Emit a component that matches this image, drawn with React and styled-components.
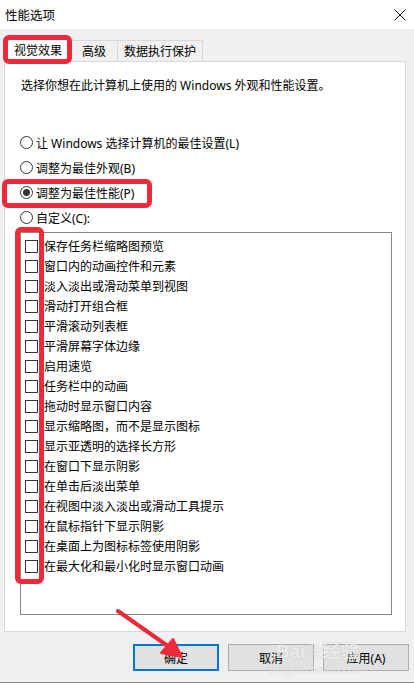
import React from 'react'
import styled, { createGlobalStyle } from 'styled-components'

const options = [
  '保存任务栏缩略图预览',
  '窗口内的动画控件和元素',
  '淡入淡出或滑动菜单到视图',
  '滑动打开组合框',
  '平滑滚动列表框',
  '平滑屏幕字体边缘',
  '启用速览',
  '任务栏中的动画',
  '拖动时显示窗口内容',
  '显示缩略图，而不是显示图标',
  '显示亚透明的选择长方形',
  '在窗口下显示阴影',
  '在单击后淡出菜单',
  '在视图中淡入淡出或滑动工具提示',
  '在鼠标指针下显示阴影',
  '在桌面上为图标标签使用阴影',
  '在最大化和最小化时显示窗口动画',
]

const modes = [
  { label: '让 Windows 选择计算机的最佳设置(L)' },
  { label: '调整为最佳外观(B)' },
  { label: '调整为最佳性能(P)', checked: true, marked: true },
  { label: '自定义(C):' },
]

function App() {
  return (
    <Window>
      <GlobalStyle />
      <TitleBar>
        <span>性能选项</span>
        <svg width="12" height="12" viewBox="0 0 12 12">
          <path d="M0.5 0.5 L11.5 11.5 M11.5 0.5 L0.5 11.5" stroke="#111" strokeWidth="1" />
        </svg>
      </TitleBar>
      <Body>
        <Tabs>
          <Tab active>
            视觉效果
            <Mark style={{ left: -3, top: -3, right: -2, bottom: -2 }} />
          </Tab>
          <Tab wide>高级</Tab>
          <Tab>数据执行保护</Tab>
        </Tabs>
        <Panel>
          <Intro>选择你想在此计算机上使用的 Windows 外观和性能设置。</Intro>
          <Radios>
            {modes.map((m) => (
              <RadioRow key={m.label}>
                <Radio checked={m.checked} />
                <span>{m.label}</span>
                {m.marked && <Mark style={{ left: -18, top: -1, width: 150, bottom: -3 }} />}
              </RadioRow>
            ))}
          </Radios>
          <ListBox>
            {options.map((o) => (
              <CheckRow key={o}>
                <Check />
                <span>{o}</span>
              </CheckRow>
            ))}
            <Mark style={{ left: -6, top: -6, width: 29, height: 357 }} />
          </ListBox>
        </Panel>
        <Buttons>
          <Button primary>确定</Button>
          <Button>取消</Button>
          <Button>应用(A)</Button>
          <Watermark>
            <b>Bai<Paw>❀</Paw>经验</b>
            <small>jingyan.baidu.com</small>
          </Watermark>
        </Buttons>
      </Body>
      <Arrow width="80" height="60" viewBox="0 0 80 60">
        <path d="M2 2 L56 40" stroke="#ec2a3a" strokeWidth="4" strokeLinecap="round" />
        <path d="M66 48 L45 44 L57 30 Z" fill="#ec2a3a" stroke="#ec2a3a" strokeWidth="2" strokeLinejoin="round" />
      </Arrow>
    </Window>
  )
}

export default App

const GlobalStyle = createGlobalStyle`
  body {
    margin: 0;
    background: #f0f0f0;
  }
`

const Window = styled.div`
  position: relative;
  width: 414px;
  height: 683px;
  box-sizing: border-box;
  background: #f0f0f0;
  border-bottom: 1px solid #8a8a8a;
  font-family: "Noto Sans", "Noto Sans CJK SC", sans-serif;
  font-size: 12px;
  color: #000;
  overflow: hidden;
`

const TitleBar = styled.div`
  height: 29px;
  background: #fff;
  display: flex;
  align-items: center;
  justify-content: space-between;
  padding: 0 8px 0 5px;
  box-sizing: border-box;
  font-size: 12.5px;
`

const Body = styled.div`
  padding: 8px 8px 0 4px;
`

const Tabs = styled.div`
  display: flex;
  align-items: flex-end;
  height: 25px;
  padding-left: 1px;
`

const Tab = styled.div`
  position: relative;
  height: ${(p) => (p.active ? '25px' : '22px')};
  box-sizing: border-box;
  padding: 0 ${(p) => (p.active ? '8px' : p.wide ? '11px' : '6px')};
  display: flex;
  align-items: center;
  background: ${(p) => (p.active ? '#fff' : '#f0f0f0')};
  border: 1px solid #d9d9d9;
  border-bottom: ${(p) => (p.active ? 'none' : '1px solid #d9d9d9')};
  margin-left: ${(p) => (p.active ? '0' : '-1px')};
  z-index: ${(p) => (p.active ? 1 : 0)};
  font-size: 12px;
`

const Mark = styled.div`
  position: absolute;
  box-sizing: border-box;
  border: 5px solid #ec2a3a;
  border-radius: 6px;
  pointer-events: none;
  z-index: 3;
`

const Panel = styled.div`
  margin-top: -1px;
  height: 571px;
  box-sizing: border-box;
  background: #fff;
  border: 1px solid #d9d9d9;
  padding: 16px 13px 0 15px;
`

const Intro = styled.div`
  line-height: 16px;
  padding-left: 1px;
`

const Radios = styled.div`
  margin-top: 36px;
  display: flex;
  flex-direction: column;
`

const RadioRow = styled.div`
  position: relative;
  height: 25px;
  flex: none;
  display: flex;
  align-items: center;
  gap: 3px;
`

const Radio = styled.span`
  width: 13px;
  height: 13px;
  box-sizing: border-box;
  border: 1px solid #333;
  border-radius: 50%;
  display: flex;
  align-items: center;
  justify-content: center;
  &::after {
    content: '';
    width: 7px;
    height: 7px;
    border-radius: 50%;
    background: ${(p) => (p.checked ? '#333' : 'transparent')};
  }
`

const ListBox = styled.div`
  position: relative;
  margin-top: 2px;
  height: 383px;
  box-sizing: border-box;
  border: 1px solid #828790;
  padding: 3px 0 0 4px;
`

const CheckRow = styled.div`
  height: 20px;
  display: flex;
  align-items: center;
  gap: 6px;
`

const Check = styled.span`
  width: 13px;
  height: 13px;
  box-sizing: border-box;
  border: 1px solid #333;
  background: #fff;
  flex: none;
`

const Buttons = styled.div`
  position: relative;
  display: flex;
  justify-content: flex-end;
  gap: 9px;
  padding-top: 12px;
  margin-right: -3px;
`

const Button = styled.div`
  width: 86px;
  height: 27px;
  box-sizing: border-box;
  display: flex;
  align-items: center;
  justify-content: center;
  background: #e1e1e1;
  border: ${(p) => (p.primary ? '2px solid #0078d7' : '1px solid #adadad')};
  font-size: 12px;
`

const Watermark = styled.div`
  position: absolute;
  left: 266px;
  top: 10px;
  display: flex;
  flex-direction: column;
  align-items: center;
  color: rgba(255, 255, 255, 0.7);
  text-shadow: 0 0 1px rgba(150, 150, 150, 0.5);
  pointer-events: none;
  b {
    font-family: "Liberation Sans", "Noto Sans CJK SC", sans-serif;
    font-size: 19px;
    line-height: 20px;
    font-weight: bold;
  }
  small {
    font-size: 11px;
    line-height: 12px;
  }
`

const Paw = styled.span`
  font-size: 16px;
`

const Arrow = styled.svg`
  position: absolute;
  left: 116px;
  top: 609px;
`
